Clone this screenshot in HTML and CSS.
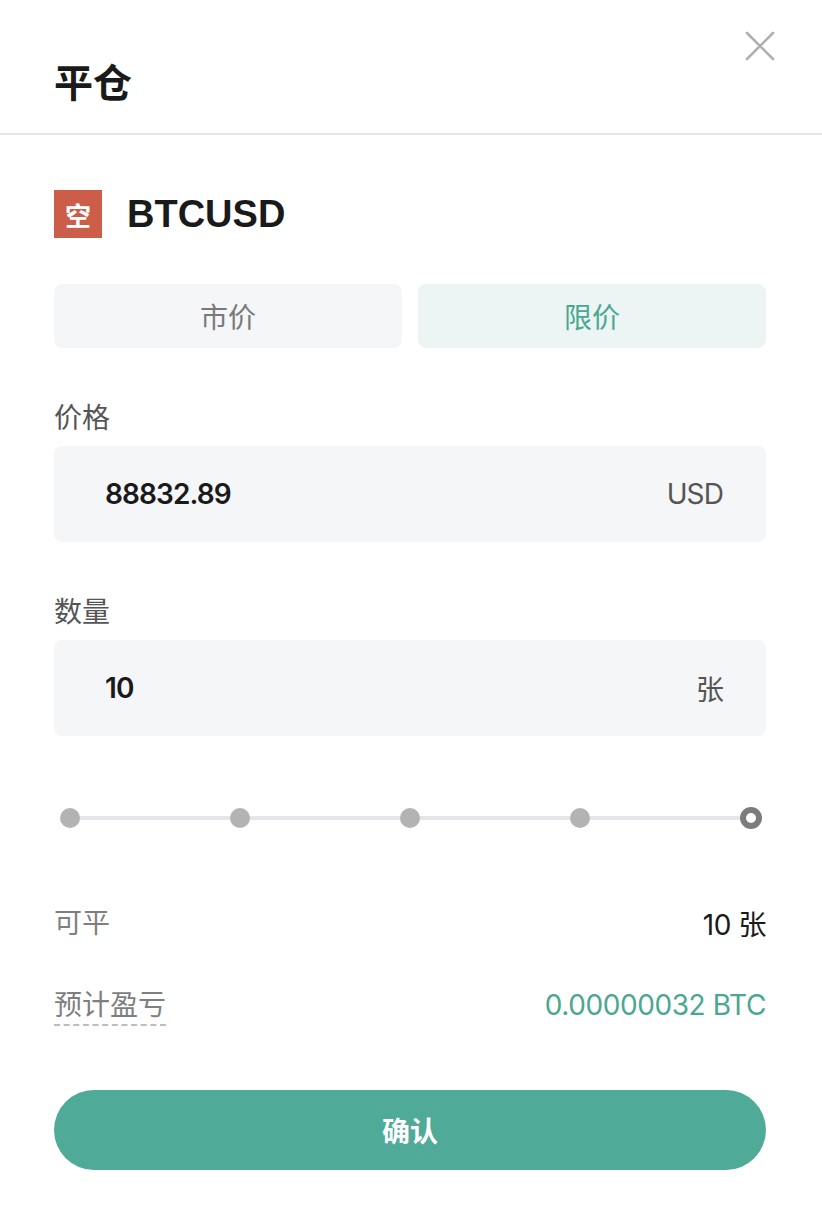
FILE: index.html
```html
<html>

<head>
	<meta charset="utf-8">
	<link rel="stylesheet" href="styles.css">
</head>

<body>
	<div class="header">
		<h1 class="title">平仓</h1>
		<span class="close">
			<svg width="30" height="30" viewBox="0 0 30 30">
				<path d="M2 2 L28 28 M28 2 L2 28" stroke="#b0b0b0" stroke-width="2.6" stroke-linecap="round" fill="none" />
			</svg>
		</span>
	</div>
	<div class="content">
		<div class="symbol">
			<span class="side">空</span>
			<span class="pair">BTCUSD</span>
		</div>
		<div class="tabs">
			<div class="tab">市价</div>
			<div class="tab active">限价</div>
		</div>
		<div class="label">价格</div>
		<div class="input">
			<span class="value">88832.89</span>
			<span class="unit">USD</span>
		</div>
		<div class="label">数量</div>
		<div class="input">
			<span class="value">10</span>
			<span class="unit">张</span>
		</div>
		<div class="slider">
			<span class="dot"></span>
			<span class="dot"></span>
			<span class="dot"></span>
			<span class="dot"></span>
			<span class="dot current"></span>
		</div>
		<div class="row first">
			<span class="key">可平</span>
			<span class="val">10 张</span>
		</div>
		<div class="row">
			<span class="key dashed">预计盈亏</span>
			<span class="val green">0.00000032 BTC</span>
		</div>
		<div class="confirm">确认</div>
	</div>
</body>

</html>
```

FILE: styles.css
```css
html, body {
	margin: 0;
	padding: 0;
	background: #fff;
}

body {
	font-family: "Inter", "Noto Sans CJK SC", sans-serif;
	color: #1a1a1a;
}

/* top bar with title and close */
.header {
	height: 133px;
	border-bottom: 2px solid #e6e6e6;
	display: flex;
	justify-content: space-between;
	align-items: flex-start;
	padding: 0 47px 0 54px;
}

.title {
	margin: 61px 0 0;
	font-family: "Noto Sans CJK SC", sans-serif;
	font-size: 39px;
	line-height: 39px;
	font-weight: 700;
	color: #1a1a1a;
}

.close {
	margin-top: 31px;
	width: 30px;
	height: 30px;
}

.content {
	padding: 0 56px 0 54px;
}

.symbol {
	margin-top: 55px;
	height: 48px;
	display: flex;
	align-items: center;
	gap: 25px;
}

.side {
	width: 48px;
	height: 48px;
	background: #cb5d49;
	color: #fff;
	font-family: "Noto Sans CJK SC", sans-serif;
	font-size: 26px;
	font-weight: 700;
	display: flex;
	align-items: center;
	justify-content: center;
}

.pair {
	font-family: "Liberation Sans", sans-serif;
	font-size: 38px;
	font-weight: 700;
	color: #1a1a1a;
}

/* market / limit switch */
.tabs {
	margin-top: 46px;
	display: flex;
	gap: 16px;
}

.tab {
	flex: 1;
	height: 64px;
	border-radius: 8px;
	background: #f5f6f8;
	color: #7a7a7a;
	font-size: 28px;
	display: flex;
	align-items: center;
	justify-content: center;
}

.tab.active {
	background: #ecf5f3;
	color: #4aa790;
}

.label {
	margin-top: 50px;
	height: 40px;
	line-height: 40px;
	font-size: 28px;
	color: #555;
}

.input {
	margin-top: 8px;
	height: 96px;
	border-radius: 8px;
	background: #f5f6f8;
	display: flex;
	align-items: center;
	justify-content: space-between;
	padding: 0 43px 0 51px;
}

.input .value {
	font-size: 28px;
	font-weight: 600;
	letter-spacing: -0.9px;
	color: #1a1a1a;
}

.input .unit {
	font-size: 28px;
	letter-spacing: -0.9px;
	color: #555;
}

/* percentage slider */
.slider {
	margin-top: 62px;
	height: 40px;
	display: flex;
	align-items: center;
	justify-content: space-between;
	padding: 0 4px 0 6px;
	background: linear-gradient(#e6e6ea, #e6e6ea) center / calc(100% - 26px) 4px no-repeat;
}

.dot {
	width: 20px;
	height: 20px;
	border-radius: 50%;
	background: #b3b3b3;
}

.dot.current {
	width: 10px;
	height: 10px;
	background: #fff;
	border: 6px solid #7c7c7c;
}

.row {
	margin-top: 42px;
	height: 40px;
	display: flex;
	align-items: center;
	justify-content: space-between;
	font-size: 28px;
}

.row.first {
	margin-top: 65px;
}

.key {
	color: #7f7f7f;
	line-height: 40px;
}

.key.dashed {
	border-bottom: 2px dashed #bdbdbd;
	line-height: 38px;
	margin-top: 2px;
}

.val {
	color: #1a1a1a;
	letter-spacing: -0.4px;
}

.val.green {
	color: #4aa790;
}

.confirm {
	margin-top: 65px;
	height: 80px;
	border-radius: 40px;
	background: #4faa98;
	color: #fff;
	font-family: "Noto Sans CJK SC", sans-serif;
	font-size: 28px;
	font-weight: 700;
	display: flex;
	align-items: center;
	justify-content: center;
}
```
